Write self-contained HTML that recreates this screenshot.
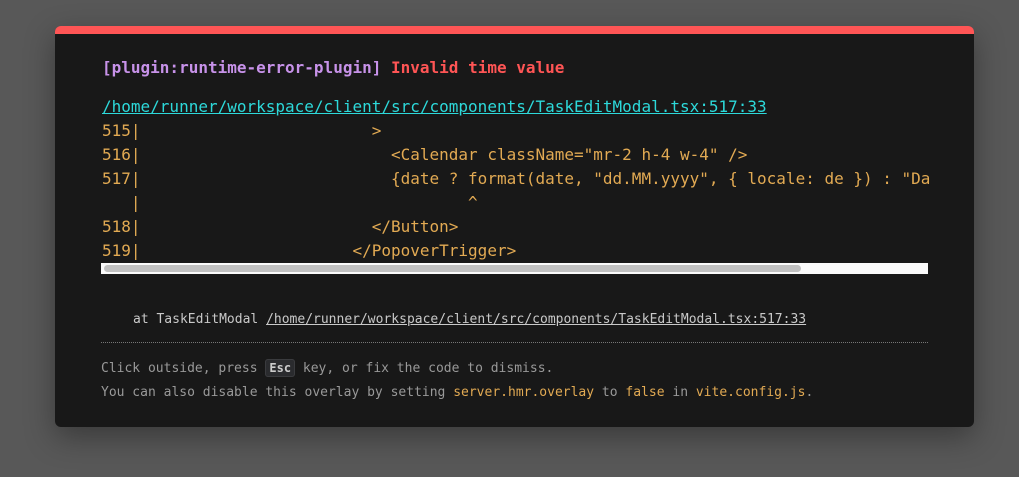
<!DOCTYPE html>
<html><head><style>
html,body{margin:0;padding:0;width:1019px;height:477px;background:#585858;overflow:hidden}
.win{position:absolute;left:55px;top:26px;width:919px;height:401px;background:#181818;border-top:8px solid #ff5555;box-sizing:border-box;border-radius:6px 6px 6px 6px;box-shadow:0 10px 30px rgba(0,0,0,.35)}
.m{font-family:"DejaVu Sans Mono","Liberation Mono",monospace;position:absolute;white-space:pre;margin:0}
.t{left:47px;top:24px;font-size:16px;font-weight:bold;line-height:20px}
.p{color:#c792e9}.r{color:#ff5555}
.l{left:47px;top:61px;font-size:16px;line-height:24px;color:#2dd9da;text-decoration:underline}
.c{left:47px;top:85px;font-size:16px;line-height:24px;color:#e2aa53}
.sb{position:absolute;left:46px;top:229px;width:827px;height:11px;background:#fafafa}
.th{position:absolute;left:3px;top:2px;width:697px;height:7px;background:#c1c1c1;border-radius:4px}
.s{left:78px;top:277px;font-size:13px;line-height:18px;color:#c9c9c9}
.s u{color:#c9c9c9}
.hr{position:absolute;left:46px;top:308px;width:827px;border-top:1px dotted #777}
.f{left:46px;top:322px;font-size:13px;line-height:24px;color:#999}
.y{color:#e2aa53}
kbd{font-family:inherit;font-weight:bold;color:#ccc;background:#2a2b2e;border:1px solid #3a3b3e;border-radius:3px;padding:1px 3px;font-size:12px}
</style></head><body>
<div class="win">
<div class="m t"><span class="p">[plugin:runtime-error-plugin]</span> <span class="r">Invalid time value</span></div>
<div class="m l">/home/runner/workspace/client/src/components/TaskEditModal.tsx:517:33</div>
<div class="m c">515|                        &gt;
516|                          &lt;Calendar className="mr-2 h-4 w-4" /&gt;
517|                          {date ? format(date, "dd.MM.yyyy", { locale: de }) : "Da
   |                                  ^
518|                        &lt;/Button&gt;
519|                      &lt;/PopoverTrigger&gt;</div>
<div class="sb"><div class="th"></div></div>
<div class="m s">at TaskEditModal <u>/home/runner/workspace/client/src/components/TaskEditModal.tsx:517:33</u></div>
<div class="hr"></div>
<div class="m f">Click outside, press <kbd>Esc</kbd> key, or fix the code to dismiss.
You can also disable this overlay by setting <span class="y">server.hmr.overlay</span> to <span class="y">false</span> in <span class="y">vite.config.js</span>.</div>
</div>
</body></html>
